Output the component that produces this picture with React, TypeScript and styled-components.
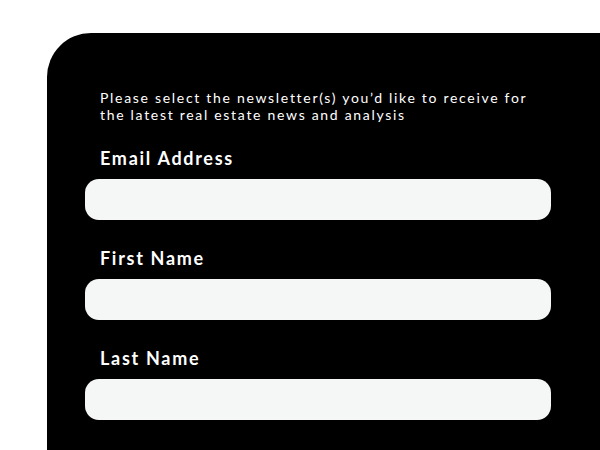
import React from "react";
import styled, { createGlobalStyle } from "styled-components";

const Global = createGlobalStyle`
  html, body { margin: 0; padding: 0; background: #ffffff; }
  body { font-family: "Lato", "Liberation Sans", sans-serif; }
`;

const Page = styled.div`
  width: 600px;
  height: 450px;
  overflow: hidden;
  padding: 33px 0 0 47px;
  box-sizing: border-box;
`;

const Panel = styled.form`
  background: #000000;
  border-top-left-radius: 44px;
  height: 417px;
  box-sizing: border-box;
  padding: 56px 49px 0 38px;
  display: flex;
  flex-direction: column;
`;

const Intro = styled.p`
  margin: 0 0 25px 15px;
  color: #ffffff;
  font-family: "Lato", sans-serif;
  font-weight: 400;
  font-size: 14px;
  line-height: 17px;
  letter-spacing: 1.7px;
  white-space: nowrap;
`;

const Field = styled.div`
  display: flex;
  flex-direction: column;
  margin-bottom: 28px;
`;

const Label = styled.label`
  color: #ffffff;
  font-family: "Lato", sans-serif;
  font-weight: 700;
  font-size: 18px;
  line-height: 20px;
  letter-spacing: 1.7px;
  padding-left: 15px;
  margin-bottom: 11px;
`;

const Input = styled.input`
  height: 41px;
  border: none;
  border-radius: 14px;
  background: #f5f6f6;
  outline: none;
  padding: 0 16px;
  box-sizing: border-box;
  width: 100%;
`;

const fields = ["Email Address", "First Name", "Last Name"];

export default function App() {
  return (
    <>
      <Global />
      <Page>
        <Panel>
          <Intro>
            Please select the newsletter(s) you’d like to receive for
            <br />
            the latest real estate news and analysis
          </Intro>
          {fields.map((f) => (
            <Field key={f}>
              <Label>{f}</Label>
              <Input type="text" />
            </Field>
          ))}
        </Panel>
      </Page>
    </>
  );
}
